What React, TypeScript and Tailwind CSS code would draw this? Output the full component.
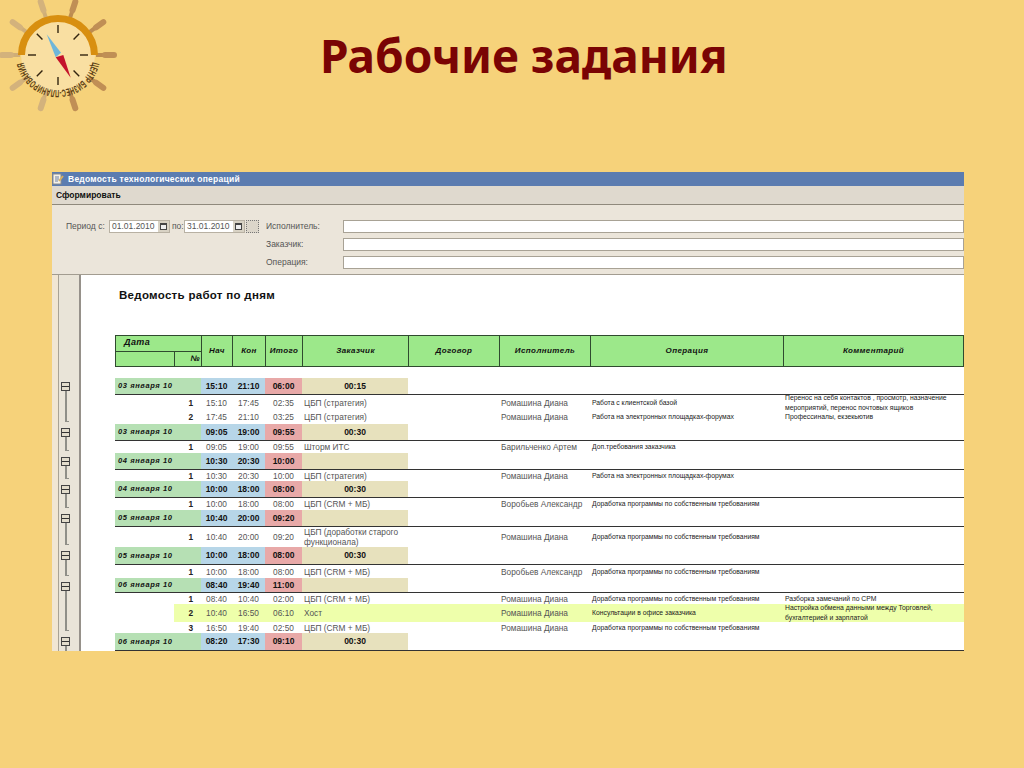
type Row =
  | { type: 'group'; h: string; date: string; start: string; end: string; total: string; extra: string }
  | {
      type: 'detail'
      h: string
      n: string
      start: string
      end: string
      total: string
      client: string
      who: string
      op: string
      note?: string
      yellow?: boolean
      last?: boolean
    }

const rows: Row[] = [
  { type: 'group', h: 'h-[17px]', date: '03 января 10', start: '15:10', end: '21:10', total: '06:00', extra: '00:15' },
  { type: 'detail', h: 'h-[15px]', n: '1', start: '15:10', end: '17:45', total: '02:35', client: 'ЦБП (стратегия)', who: 'Ромашина Диана', op: 'Работа с клиентской базой', note: 'Перенос на себя контактов , просмотр, назначение мероприятий, перенос почтовых ящиков' },
  { type: 'detail', h: 'h-[14px]', n: '2', start: '17:45', end: '21:10', total: '03:25', client: 'ЦБП (стратегия)', who: 'Ромашина Диана', op: 'Работа на электронных площадках-форумах', note: 'Профессиналы, екзекьютив', last: true },
  { type: 'group', h: 'h-[17px]', date: '03 января 10', start: '09:05', end: '19:00', total: '09:55', extra: '00:30' },
  { type: 'detail', h: 'h-[12px]', n: '1', start: '09:05', end: '19:00', total: '09:55', client: 'Шторм ИТС', who: 'Барильченко Артем', op: 'Доп.требования заказчика', last: true },
  { type: 'group', h: 'h-[17px]', date: '04 января 10', start: '10:30', end: '20:30', total: '10:00', extra: '' },
  { type: 'detail', h: 'h-[11px]', n: '1', start: '10:30', end: '20:30', total: '10:00', client: 'ЦБП (стратегия)', who: 'Ромашина Диана', op: 'Работа на электронных площадках-форумах', last: true },
  { type: 'group', h: 'h-[17px]', date: '04 января 10', start: '10:00', end: '18:00', total: '08:00', extra: '00:30' },
  { type: 'detail', h: 'h-[12px]', n: '1', start: '10:00', end: '18:00', total: '08:00', client: 'ЦБП (CRM + МБ)', who: 'Воробьев Александр', op: 'Доработка программы по собственным требованиям', last: true },
  { type: 'group', h: 'h-[17px]', date: '05 января 10', start: '10:40', end: '20:00', total: '09:20', extra: '' },
  { type: 'detail', h: 'h-[20px]', n: '1', start: '10:40', end: '20:00', total: '09:20', client: 'ЦБП (доработки старого функционала)', who: 'Ромашина Диана', op: 'Доработка программы по собственным требованиям', last: true },
  { type: 'group', h: 'h-[18px]', date: '05 января 10', start: '10:00', end: '18:00', total: '08:00', extra: '00:30' },
  { type: 'detail', h: 'h-[13px]', n: '1', start: '10:00', end: '18:00', total: '08:00', client: 'ЦБП (CRM + МБ)', who: 'Воробьев Александр', op: 'Доработка программы по собственным требованиям', last: true },
  { type: 'group', h: 'h-[15px]', date: '06 января 10', start: '08:40', end: '19:40', total: '11:00', extra: '' },
  { type: 'detail', h: 'h-[11px]', n: '1', start: '08:40', end: '10:40', total: '02:00', client: 'ЦБП (CRM + МБ)', who: 'Ромашина Диана', op: 'Доработка программы по собственным требованиям', note: 'Разборка замечаний по СРМ' },
  { type: 'detail', h: 'h-[18px]', n: '2', start: '10:40', end: '16:50', total: '06:10', client: 'Хост', who: 'Ромашина Диана', op: 'Консультации в офисе заказчика', note: 'Настройка обмена данными между Торговлей, бухгалтерией и зарплатой', yellow: true },
  { type: 'detail', h: 'h-[11px]', n: '3', start: '16:50', end: '19:40', total: '02:50', client: 'ЦБП (CRM + МБ)', who: 'Ромашина Диана', op: 'Доработка программы по собственным требованиям', last: true },
  { type: 'group', h: 'h-[18px]', date: '06 января 10', start: '08:20', end: '17:30', total: '09:10', extra: '00:30' },
]

const spokes = [0, 36, 72, 108, 144, 180, 216, 252, 288, 324]
const ticks = [0, 45, 90, 135, 180, 225, 270, 315]

function Logo() {
  return (
    <svg width="120" height="112" viewBox="0 0 120 112" className="shrink-0">
      {spokes.map((a) => (
        <g key={a} transform={`rotate(${a} 58 55)`}>
          <rect x="96" y="53" width="8" height="4" fill={a > 90 && a < 270 ? '#cfae78' : '#bd8c50'} />
          <rect x="102" y="52" width="15" height="6" rx="3" fill={a > 90 && a < 270 ? '#d3b27c' : '#c08f55'} />
        </g>
      ))}
      <circle cx="58" cy="55" r="37" fill="#f9dfa2" />
      <path d="M21.5 55 A36.5 36.5 0 0 1 94.5 55" fill="none" stroke="#d88f10" strokeWidth="7" />
      {ticks.map((a) => (
        <line key={a} x1="58" y1="25" x2="58" y2="33" stroke="#33240f" strokeWidth="1.4" transform={`rotate(${a} 58 55)`} />
      ))}
      <polygon points="46.7,34.3 61,52.7 55.7,57.3" fill="#6fb6da" />
      <polygon points="55.7,57.3 63.3,55 70.7,77.7" fill="#c4122b" />
      <path id="logo-arc" d="M92.3 62 A35 35 0 0 1 23.7 62" fill="none" />
      <text fill="#5a3d14" fontFamily="'Liberation Sans', sans-serif" fontSize="10.5" fontWeight="700">
        <textPath href="#logo-arc" startOffset="0" textLength="95" lengthAdjust="spacingAndGlyphs">ЦЕНТР БИЗНЕС-ПЛАНИРОВАНИЯ</textPath>
      </text>
    </svg>
  )
}

function TitleIcon() {
  return (
    <svg width="12" height="14" viewBox="0 0 12 14" className="shrink-0">
      <rect x="1" y="2" width="8" height="10" fill="#f4f1e8" stroke="#8a8a8a" />
      <path d="M3 5h4M3 7h4M3 9h3" stroke="#6b7fa5" />
      <path d="M7 9l4-5" stroke="#d8b060" strokeWidth="2" />
    </svg>
  )
}

function Field({ value }: { value: string }) {
  return (
    <div className="flex h-[13px] w-[61px] items-center border border-[#b8b1a3] bg-white pl-[2px] text-[8.5px] text-[#555]">
      <span className="flex-1">{value}</span>
      <span className="flex h-full w-[11px] items-center justify-center bg-[#d8d2c4]">
        <span className="h-[7px] w-[7px] border border-[#444] border-t-2 bg-[#eee]" />
      </span>
    </div>
  )
}

function Gutter({ kind }: { kind: 'none' | 'group' | 'line' | 'end' }) {
  return (
    <div className="flex w-[23px] shrink-0 flex-col self-stretch border-l border-r-2 border-l-[#a8a295] border-r-[#96918a] bg-[#e9e4d8]">
      {kind === 'group' && (
        <>
          <div className="mt-[4px] ml-[2px] flex h-[9px] w-[9px] shrink-0 items-center justify-center border border-[#444] bg-[#e2dccb]">
            <span className="h-px w-[7px] bg-[#333]" />
          </div>
          <div className="ml-[6px] w-[2px] flex-1 bg-[#8f8f88]" />
        </>
      )}
      {kind === 'line' && <div className="ml-[6px] w-[2px] flex-1 bg-[#8f8f88]" />}
      {kind === 'end' && <div className="ml-[6px] h-[calc(100%-2px)] w-[4px] border-b border-l-2 border-[#8f8f88]" />}
    </div>
  )
}

function GroupRow({ row }: { row: Extract<Row, { type: 'group' }> }) {
  return (
    <div className={`flex ${row.h}`}>
      <div className="w-[6px] shrink-0 bg-[#f1e6d3]" />
      <Gutter kind="group" />
      <div className="w-[34px] shrink-0 bg-white" />
      <div className="grid flex-1 grid-cols-[86px_31px_33px_37px_106px_1fr] items-stretch border-b border-[#333] bg-white text-[8.5px] font-bold text-[#111]">
        <div className="flex items-center bg-[#b6e0b4] pl-[3px] text-[7.5px] italic tracking-[0.6px]">{row.date}</div>
        <div className="flex items-center justify-center bg-[#b7d6e8]">{row.start}</div>
        <div className="flex items-center justify-center bg-[#b7d6e8]">{row.end}</div>
        <div className="flex items-center justify-center bg-[#e8a9a8]">{row.total}</div>
        <div className="flex items-center justify-center bg-[#e7e1bd]">{row.extra}</div>
        <div />
      </div>
    </div>
  )
}

function DetailRow({ row }: { row: Extract<Row, { type: 'detail' }> }) {
  return (
    <div className={`flex ${row.h}`}>
      <div className="w-[6px] shrink-0 bg-[#f1e6d3]" />
      <Gutter kind={row.last ? 'end' : 'line'} />
      <div className="w-[34px] shrink-0 bg-white" />
      <div className="w-[59px] shrink-0 bg-white" />
      <div
        className={`grid flex-1 grid-cols-[27px_31px_33px_37px_106px_91px_91px_193px_181px] grid-rows-[100%] items-center text-[8.3px] leading-[10px] text-[#555] ${
          row.yellow ? 'bg-[#eeffab]' : 'bg-white'
        }`}
      >
        <div className="pr-[8px] text-right font-bold text-[#222]">{row.n}</div>
        <div className="text-center">{row.start}</div>
        <div className="text-center">{row.end}</div>
        <div className="text-center">{row.total}</div>
        <div className="pl-[2px]">{row.client}</div>
        <div />
        <div className="pl-[2px] whitespace-nowrap">{row.who}</div>
        <div className="pl-[2px] text-[6.8px] text-[#222] whitespace-nowrap">{row.op}</div>
        <div className="relative z-10 pl-[2px] pr-[12px] text-[6.8px] leading-[10px] text-[#222]">{row.note}</div>
      </div>
    </div>
  )
}

function Blank({ className, children }: { className: string; children?: React.ReactNode }) {
  return (
    <div className={`flex ${className}`}>
      <div className="w-[6px] shrink-0 bg-[#f1e6d3]" />
      <Gutter kind="none" />
      <div className="flex-1 bg-white">{children}</div>
    </div>
  )
}

export default function App() {
  return (
    <div className="h-[768px] w-[1024px] overflow-hidden bg-[#f6d27a] font-['Liberation_Sans',Arial,sans-serif]">
      <header className="flex h-[172px] items-start">
        <Logo />
        <h1 className="mt-[27px] ml-[200px] font-['Noto_Sans',sans-serif] text-[46px] leading-[56px] font-bold whitespace-nowrap text-[#7a0404]">Рабочие задания</h1>
      </header>

      <main className="ml-[52px] flex w-[912px] flex-col">
        <div className="flex h-[14px] items-center gap-[4px] bg-[#5b7cb0] text-[8.5px] font-bold tracking-[0.25px] text-white">
          <TitleIcon />
          <span>Ведомость технологических операций</span>
        </div>
        <div className="flex h-[19px] items-center border-b border-[#8f897c] bg-[#dfd9ce] pl-[4px] text-[8.5px] font-bold text-[#111]">Сформировать</div>

        <div className="grid h-[70px] grid-cols-[214px_77px_1fr] content-start gap-y-[5px] border-b border-[#a29c90] bg-[#ebe5da] pt-[15px] text-[8.5px] text-[#555]">
          <div className="flex h-[13px] items-center pl-[14px]">
            <span className="w-[43px]">Период с:</span>
            <Field value="01.01.2010" />
            <span className="ml-[2px] w-[12px]">по:</span>
            <Field value="31.01.2010" />
            <span className="ml-[1px] h-[13px] w-[13px] border border-dotted border-[#777] bg-[#dcd6ca]" />
          </div>
          <div className="flex items-center">Исполнитель:</div>
          <div className="h-[13px] border border-[#a8a295] bg-white" />
          <div />
          <div className="flex items-center">Заказчик:</div>
          <div className="h-[13px] border border-[#a8a295] bg-white" />
          <div />
          <div className="flex items-center">Операция:</div>
          <div className="h-[13px] border border-[#a8a295] bg-white" />
        </div>

        <Blank className="h-[60px]">
          <div className="pt-[13px] pl-[38px] text-[11.5px] leading-[14px] font-bold tracking-[0.3px] text-[#111]">Ведомость работ по дням</div>
        </Blank>

        <div className="flex h-[32px]">
          <div className="w-[6px] shrink-0 bg-[#f1e6d3]" />
          <Gutter kind="none" />
          <div className="w-[34px] shrink-0 bg-white" />
          <div className="grid flex-1 grid-cols-[59px_27px_31px_33px_37px_106px_91px_91px_193px_1fr] grid-rows-[16px_14px] border border-[#2f4a2f] bg-[#9ce88a] text-[8px] font-bold italic text-[#111] tracking-[0.4px]">
            <div className="col-span-2 border-r border-b border-[#2f4a2f] pl-[8px] text-[9px] leading-[13px]">Дата</div>
            <div className="row-span-2 flex items-center justify-center border-r border-[#2f4a2f]">Нач</div>
            <div className="row-span-2 flex items-center justify-center border-r border-[#2f4a2f]">Кон</div>
            <div className="row-span-2 flex items-center justify-center border-r border-[#2f4a2f]">Итого</div>
            <div className="row-span-2 flex items-center justify-center border-r border-[#2f4a2f]">Заказчик</div>
            <div className="row-span-2 flex items-center justify-center border-r border-[#2f4a2f]">Договор</div>
            <div className="row-span-2 flex items-center justify-center border-r border-[#2f4a2f]">Исполнитель</div>
            <div className="row-span-2 flex items-center justify-center border-r border-[#2f4a2f]">Операция</div>
            <div className="row-span-2 flex items-center justify-center">Комментарий</div>
            <div className="border-r border-[#2f4a2f]" />
            <div className="flex items-center justify-end border-r border-[#2f4a2f] pr-[1px] text-[8px]">№</div>
          </div>
        </div>

        <Blank className="h-[11px]" />

        {rows.map((row, i) => (row.type === 'group' ? <GroupRow key={i} row={row} /> : <DetailRow key={i} row={row} />))}
      </main>
    </div>
  )
}
